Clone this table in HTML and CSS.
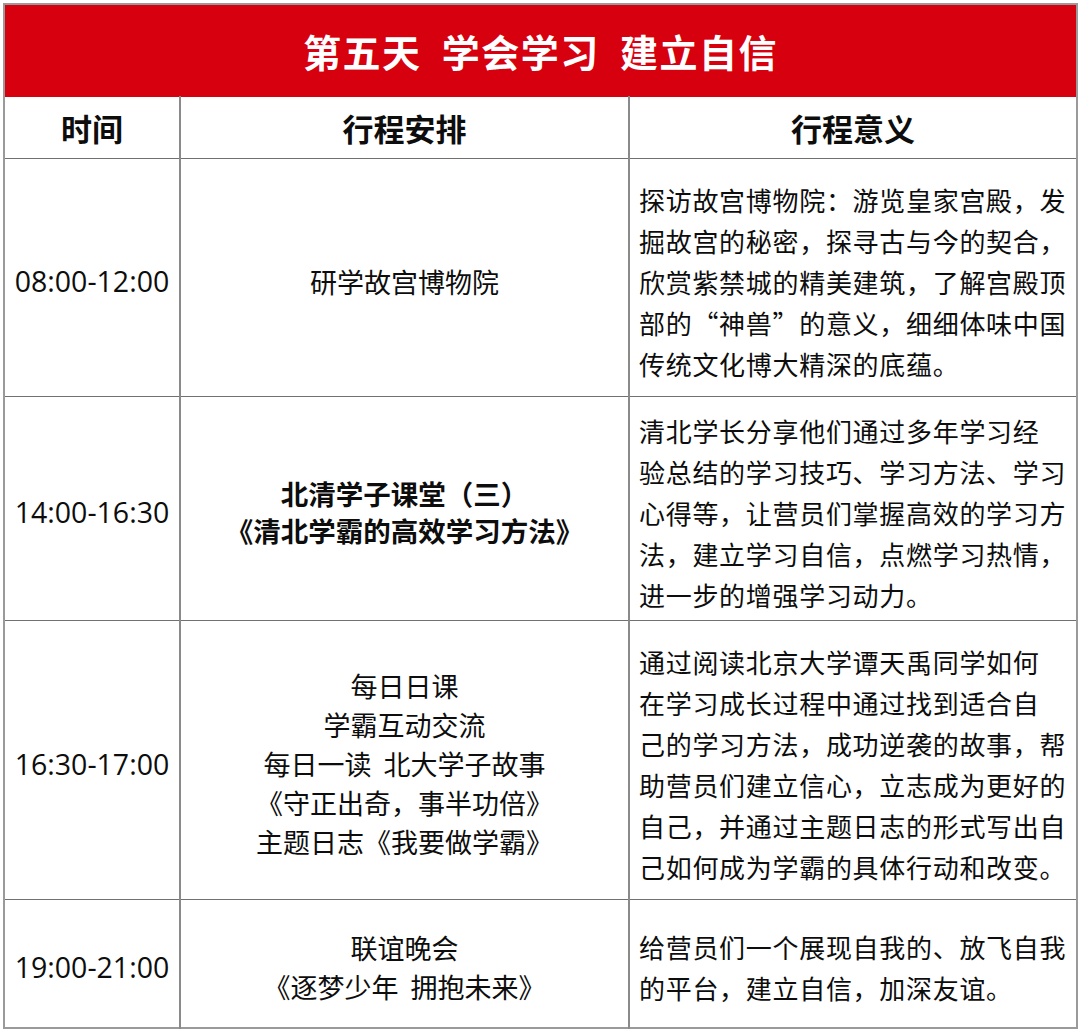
FILE: index.html
```html
<!DOCTYPE html>
<html lang="zh-CN">
<head>
<meta charset="utf-8">
<link rel="stylesheet" href="styles.css">
</head>
<body>
<table class="sched">
  <colgroup>
    <col class="c-time">
    <col class="c-plan">
    <col class="c-mean">
  </colgroup>
  <tr class="r-title"><th colspan="3" class="title">第五天&nbsp;&nbsp;学会学习&nbsp;&nbsp;建立自信</th></tr>
  <tr class="r-head">
    <th class="head">时间</th>
    <th class="head">行程安排</th>
    <th class="head">行程意义</th>
  </tr>
  <tr class="r1">
    <td class="time">08:00-12:00</td>
    <td class="plan">研学故宫博物院</td>
    <td class="mean">探访故宫博物院：游览皇家宫殿，发<br>掘故宫的秘密，探寻古与今的契合，<br>欣赏紫禁城的精美建筑，了解宫殿顶<br>部的“神兽”的意义，细细体味中国<br>传统文化博大精深的底蕴。</td>
  </tr>
  <tr class="r2">
    <td class="time">14:00-16:30</td>
    <td class="plan bold">北清学子课堂（三）<br>《清北学霸的高效学习方法》</td>
    <td class="mean">清北学长分享他们通过多年学习经<br>验总结的学习技巧、学习方法、学习<br>心得等，让营员们掌握高效的学习方<br>法，建立学习自信，点燃学习热情，<br>进一步的增强学习动力。</td>
  </tr>
  <tr class="r3">
    <td class="time">16:30-17:00</td>
    <td class="plan">每日日课<br>学霸互动交流<br>每日一读&nbsp;&nbsp;北大学子故事<br>《守正出奇，事半功倍》<br>主题日志《我要做学霸》</td>
    <td class="mean">通过阅读北京大学谭天禹同学如何<br>在学习成长过程中通过找到适合自<br>己的学习方法，成功逆袭的故事，帮<br>助营员们建立信心，立志成为更好的<br>自己，并通过主题日志的形式写出自<br>己如何成为学霸的具体行动和改变。</td>
  </tr>
  <tr class="r4">
    <td class="time">19:00-21:00</td>
    <td class="plan">联谊晚会<br>《逐梦少年&nbsp;&nbsp;拥抱未来》</td>
    <td class="mean">给营员们一个展现自我的、放飞自我<br>的平台，建立自信，加深友谊。</td>
  </tr>
</table>
</body>
</html>
```
FILE: styles.css
```css
html, body {
  margin: 0;
  padding: 0;
  background: #fff;
}
body {
  padding: 3px 0 0 3px;
  font-family: "Noto Sans CJK SC", sans-serif;
  color: #0d0d0d;
}
.sched {
  border-collapse: collapse;
  width: 1073px;
  table-layout: fixed;
  border: 2px solid #9a9a9a;
}
.c-time { width: 176px; }
.c-plan { width: 449px; }
.c-mean { width: 448px; }
.sched td, .sched th {
  border: 1px solid #707070;
  padding: 0;
  white-space: nowrap;
  overflow: hidden;
}
.sched td {
  padding-top: 7px;
}
.sched td + td, .sched th + th {
  border-left: 2px solid #8a8a8a;
}
.title {
  background: #d7000f;
  color: #fff;
  font-size: 38px;
  font-weight: 700;
  height: 91px;
  letter-spacing: 1.5px;
  border-color: #d7000f !important;
}
.r-title th { border-bottom: 1px solid #b00; }
.head {
  height: 61px;
  font-size: 31px;
  font-weight: 700;
  color: #0d0d0d;
}
.r1 td { height: 230px; }
.r2 td { height: 216px; }
.r3 td { height: 271px; }
.r4 td { height: 120px; }
.time {
  text-align: center;
  font-family: "Open Sans", "Noto Sans CJK SC", sans-serif;
  font-size: 28.5px;
}
.plan {
  text-align: center;
  font-size: 27px;
  line-height: 39px;
}
.plan.bold { font-weight: 700; line-height: 37px; font-size: 27.5px; }
.mean {
  text-align: left;
  font-size: 26px;
  line-height: 41px;
  letter-spacing: 0.7px;
  padding-left: 9px !important;
}
```
